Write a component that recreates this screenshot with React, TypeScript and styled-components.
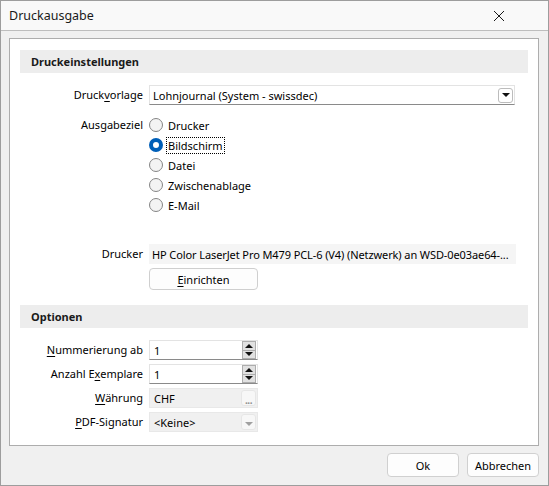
import React, { useState } from 'react';
import styled, { createGlobalStyle } from 'styled-components';

const GlobalStyle = createGlobalStyle`
	html, body {
		margin: 0;
		padding: 0;
		background: #ffffff;
	}
	body {
		font-family: 'Noto Sans', 'Open Sans', sans-serif;
		font-size: 11px;
		color: #000;
	}
	* {
		box-sizing: border-box;
	}
`;

const ausgabeziele = ['Drucker', 'Bildschirm', 'Datei', 'Zwischenablage', 'E-Mail'];

const App = () => {
	const [ziel, setZiel] = useState('Bildschirm');

	return (
		<>
			<GlobalStyle />
			<Window>
				<TitleBar>
					<Title>Druckausgabe</Title>
					<CloseButton title="Schliessen">
						<svg width="12" height="12" viewBox="0 0 12 12">
							<path d="M1 1 L11 11 M11 1 L1 11" stroke="#1a1a1a" strokeWidth="1" fill="none" />
						</svg>
					</CloseButton>
				</TitleBar>
				<Body>
					<Panel>
						<SectionHeader>Druckeinstellungen</SectionHeader>
						<FormGrid $top={12}>
							<Label>
								Druck<u>v</u>orlage
							</Label>
							<Select>
								<span>Lohnjournal (System - swissdec)</span>
								<DropButton>
									<Triangle />
								</DropButton>
							</Select>
						</FormGrid>
						<FormGrid $top={10}>
							<Label $alignTop>Ausgabeziel</Label>
							<RadioList>
								{ausgabeziele.map((z) => (
									<RadioRow key={z} onClick={() => setZiel(z)}>
										<RadioCircle $checked={ziel === z} />
										<RadioText $focus={ziel === z}>{z}</RadioText>
									</RadioRow>
								))}
							</RadioList>
						</FormGrid>
						<FormGrid $top={29}>
							<Label>Drucker</Label>
							<ReadOnlyText>HP Color LaserJet Pro M479 PCL-6 (V4) (Netzwerk) an WSD-0e03ae64-...</ReadOnlyText>
						</FormGrid>
						<FormGrid $top={4}>
							<span />
							<SetupButton>
								<u>E</u>inrichten
							</SetupButton>
						</FormGrid>
						<SectionHeader $top={15}>Optionen</SectionHeader>
						<FormGrid $top={12}>
							<Label>
								<u>N</u>ummerierung ab
							</Label>
							<SmallInput>
								<span>1</span>
								<Spinner>
									<SpinHalf>
										<Triangle $up />
									</SpinHalf>
									<SpinHalf>
										<Triangle />
									</SpinHalf>
								</Spinner>
							</SmallInput>
						</FormGrid>
						<FormGrid $top={4}>
							<Label>
								Anzahl E<u>x</u>emplare
							</Label>
							<SmallInput>
								<span>1</span>
								<Spinner>
									<SpinHalf>
										<Triangle $up />
									</SpinHalf>
									<SpinHalf>
										<Triangle />
									</SpinHalf>
								</Spinner>
							</SmallInput>
						</FormGrid>
						<FormGrid $top={4}>
							<Label>
								<u>W</u>ährung
							</Label>
							<SmallInput $disabled>
								<span>CHF</span>
								<DisabledButton>...</DisabledButton>
							</SmallInput>
						</FormGrid>
						<FormGrid $top={4}>
							<Label>
								<u>P</u>DF-Signatur
							</Label>
							<SmallInput $disabled>
								<span>&lt;Keine&gt;</span>
								<DisabledButton>
									<Triangle $muted />
								</DisabledButton>
							</SmallInput>
						</FormGrid>
					</Panel>
				</Body>
				<Footer>
					<DialogButton>Ok</DialogButton>
					<DialogButton>Abbrechen</DialogButton>
				</Footer>
			</Window>
		</>
	);
};

export default App;

const Window = styled.div`
	width: 549px;
	height: 486px;
	border: 1px solid #9d9d9d;
	background: #f0f0f0;
	display: flex;
	flex-direction: column;
`;

const TitleBar = styled.div`
	height: 30px;
	flex: none;
	background: #f9f9f9;
	border-bottom: 1px solid #bdbdbd;
	display: flex;
	align-items: center;
	justify-content: space-between;
	padding: 0 26px 0 8px;
`;

const Title = styled.span`
	font-size: 12.5px;
	color: #1a1a1a;
`;

const CloseButton = styled.div`
	width: 46px;
	height: 29px;
	display: flex;
	align-items: center;
	justify-content: center;
`;

const Body = styled.div`
	flex: 1;
	display: flex;
	flex-direction: column;
	padding: 7px 9px 0 8px;
`;

const Panel = styled.div`
	flex: 1;
	background: #ffffff;
	border: 1px solid #adadad;
	padding: 11px 10px 0 10px;
`;

const SectionHeader = styled.div<{ $top?: number }>`
	height: 23px;
	margin-top: ${(p) => p.$top ?? 0}px;
	background: #ededed;
	display: flex;
	align-items: center;
	padding-left: 11px;
	font-weight: bold;
	color: #1a1a1a;
`;

const FormGrid = styled.div<{ $top: number }>`
	display: grid;
	grid-template-columns: 123px 1fr;
	column-gap: 6px;
	margin-top: ${(p) => p.$top}px;
`;

const Label = styled.div<{ $alignTop?: boolean }>`
	text-align: right;
	align-self: ${(p) => (p.$alignTop ? 'start' : 'center')};
	line-height: 20px;
	white-space: nowrap;
	u {
		text-decoration-thickness: 1px;
		text-underline-offset: 2px;
	}
`;

const Select = styled.div`
	height: 20px;
	width: 366px;
	border: 1px solid #e3e3e3;
	border-bottom-color: #8a8a8a;
	background: #fff;
	display: flex;
	align-items: center;
	justify-content: space-between;
	padding: 0 1px 0 3px;
`;

const DropButton = styled.div`
	width: 15px;
	height: 15px;
	border: 1px solid #bcbcbc;
	border-radius: 3px;
	background: #fff;
	display: flex;
	align-items: center;
	justify-content: center;
`;

const Triangle = styled.span<{ $up?: boolean; $muted?: boolean }>`
	width: 0;
	height: 0;
	border-left: 4px solid transparent;
	border-right: 4px solid transparent;
	${(p) =>
		p.$up
			? `border-bottom: 4px solid ${p.$muted ? '#a0a0a0' : '#111'};`
			: `border-top: 4px solid ${p.$muted ? '#a0a0a0' : '#111'};`}
`;

const RadioList = styled.div`
	display: flex;
	flex-direction: column;
`;

const RadioRow = styled.div`
	height: 20px;
	display: flex;
	align-items: center;
	gap: 3px;
	cursor: default;
`;

const RadioCircle = styled.span<{ $checked: boolean }>`
	width: 14px;
	height: 14px;
	border-radius: 50%;
	flex: none;
	${(p) =>
		p.$checked
			? `background: #ffffff; border: 4px solid #005fb8;`
			: `background: #f3f3f3; border: 1px solid #858585;`}
`;

const RadioText = styled.span<{ $focus: boolean }>`
	padding: 0 1px;
	line-height: 15px;
	border: 1px dotted ${(p) => (p.$focus ? '#000' : 'transparent')};
`;

const ReadOnlyText = styled.div`
	height: 20px;
	width: 367px;
	background: #f5f5f5;
	display: flex;
	align-items: center;
	padding-left: 3px;
	letter-spacing: -0.1px;
	white-space: nowrap;
	overflow: hidden;
`;

const SetupButton = styled.div`
	width: 109px;
	height: 22px;
	border: 1px solid #cfcfcf;
	border-radius: 4px;
	background: #fdfdfd;
	display: flex;
	align-items: center;
	justify-content: center;
	u {
		text-underline-offset: 2px;
	}
`;

const SmallInput = styled.div<{ $disabled?: boolean }>`
	width: 109px;
	height: 20px;
	border: 1px solid ${(p) => (p.$disabled ? '#e8e8e8' : '#e3e3e3')};
	border-bottom-color: ${(p) => (p.$disabled ? '#e8e8e8' : '#8a8a8a')};
	background: ${(p) => (p.$disabled ? '#f0f0f0' : '#ffffff')};
	display: flex;
	align-items: center;
	justify-content: space-between;
	padding: 0 1px 0 4px;
`;

const Spinner = styled.div`
	width: 14px;
	height: 18px;
	display: flex;
	flex-direction: column;
	border: 1px solid #adadad;
	background: #e1e1e1;
`;

const SpinHalf = styled.div`
	flex: 1;
	display: flex;
	align-items: center;
	justify-content: center;
	& + & {
		border-top: 1px solid #adadad;
	}
`;

const DisabledButton = styled.div`
	width: 15px;
	height: 16px;
	border: 1px solid #e6e6e6;
	border-radius: 3px;
	background: #f7f7f7;
	display: flex;
	align-items: center;
	justify-content: center;
	color: #8f8f8f;
	font-size: 10px;
	font-weight: bold;
	line-height: 16px;
	letter-spacing: -0.5px;
	padding-top: 3px;
`;

const Footer = styled.div`
	height: 39px;
	flex: none;
	display: flex;
	justify-content: flex-end;
	align-items: flex-start;
	gap: 8px;
	padding: 7px 9px 0 0;
`;

const DialogButton = styled.div`
	width: 72px;
	height: 24px;
	border: 1px solid #d0d0d0;
	border-radius: 4px;
	background: #fdfdfd;
	display: flex;
	align-items: center;
	justify-content: center;
`;
